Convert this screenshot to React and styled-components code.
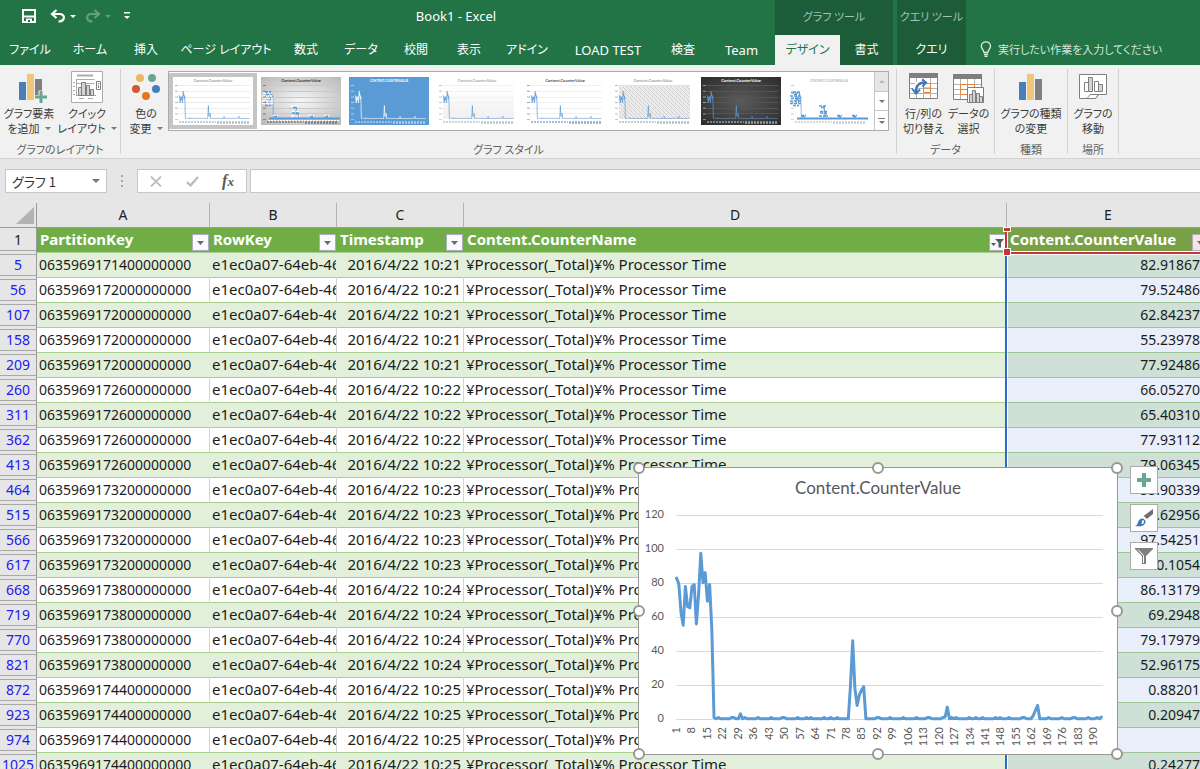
import React from "react";
import styled, { createGlobalStyle, css } from "styled-components";

const UI_FONT = '"Noto Sans", "Noto Sans CJK JP", sans-serif';
const JP_FONT = '"Noto Sans CJK JP", "Noto Sans", sans-serif';
const SHEET_FONT = '"Noto Sans", "Noto Sans CJK JP", sans-serif';
const CHART_FONT = 'Lato, "Noto Sans", sans-serif';

const c = {
  green: "#227447",
  darkGreen: "#1c5c38",
  ribbon: "#f1f1f1",
  chrome: "#e6e6e6",
  line: "#c6c6c6",
  rule: "#9b9b9b",
  series: "#5b9bd5",
  red: "#c8323c",
  blue: "#2e6ac8",
};

const GlobalStyle = createGlobalStyle`
  *, *::before, *::after { box-sizing: border-box; }
  body { margin: 0; font-family: ${UI_FONT}; background: #fff; }
  button, input { font: inherit; color: inherit; margin: 0; padding: 0; border: 0; background: none; }
  h1, h2 { margin: 0; font-weight: 400; }
`;

const Page = styled.div`
  display: flex;
  flex-direction: column;
  height: 100vh;
  overflow: hidden;
`;

/* ---------- title bar and tabs ---------- */

const Header = styled.header`
  display: flex;
  flex: none;
  background: ${c.green};
  color: #fff;
  overflow: hidden;
`;

const HeaderBlock = styled.div`
  display: flex;
  flex-direction: column;
  flex: none;
  background: ${(p) => (p.$context ? c.darkGreen : "transparent")};
  margin-right: ${(p) => p.$gap || 0}px;
`;

const TitleRow = styled.div`
  display: flex;
  align-items: center;
  height: 35px;
  padding-bottom: 3px;
`;

const QuickAccess = styled.div`
  display: flex;
  align-items: center;
  width: 137px;
  padding-left: 21px;
`;

const QuickButton = styled.button`
  display: flex;
  align-items: center;
  justify-content: center;
  width: ${(p) => p.$w}px;
  height: 20px;
  margin-left: ${(p) => p.$gap || 0}px;
  opacity: ${(p) => (p.$dim ? 0.3 : 1)};
  svg { display: block; flex: none; }
`;

const BookTitle = styled.h1`
  flex: 1;
  text-align: center;
  font-size: 13px;
  line-height: 20px;
`;

const ContextTitle = styled.div`
  flex: 1;
  text-align: center;
  font-family: ${JP_FONT};
  font-feature-settings: "palt";
  font-size: 11px;
  line-height: 20px;
  color: #a3c4b1;
`;

const Tabs = styled.nav`
  display: flex;
`;

const Tab = styled.button`
  width: ${(p) => p.$w}px;
  height: 30px;
  && { font-size: ${(p) => (p.$latin ? 13 : 12)}px; }
  line-height: 28px;
  font-feature-settings: "palt";
  white-space: nowrap;
  text-align: center;
  ${(p) => p.$active && css`
    background: ${c.ribbon};
    color: ${c.green};
  `}
`;

const TellMe = styled.label`
  display: flex;
  align-items: center;
  flex: 1;
  gap: 6px;
  height: 30px;
  margin-top: 35px;
  padding-left: 14px;
  padding-bottom: 2px;
  color: #d5e5db;
  min-width: 0;
  svg { flex: none; }
  input {
    flex: 1;
    min-width: 0;
    height: 24px;
    font-family: ${JP_FONT};
    font-size: 11px;
    font-feature-settings: "palt";
  }
  input::placeholder { color: #d5e5db; opacity: 1; }
`;

/* ---------- ribbon ---------- */

const Ribbon = styled.section`
  display: flex;
  flex: none;
  height: 94px;
  padding: 4px 0;
  background: ${c.ribbon};
  border-bottom: 1px solid #d2d2d2;
  overflow: hidden;
`;

const Group = styled.div`
  display: flex;
  flex-direction: column;
  flex: none;
  border-right: 1px solid #d2d2d2;
`;

const GroupBody = styled.div`
  display: flex;
  flex: 1;
  padding: 0 ${(p) => p.$right || 0}px 0 ${(p) => p.$left || 0}px;
`;

const GroupName = styled.div`
  height: 18px;
  text-align: center;
  font-family: ${JP_FONT};
  font-feature-settings: "palt";
  font-size: 11px;
  line-height: 26px;
  color: #5f5f5f;
`;

const RibbonButton = styled.button`
  display: flex;
  flex-direction: column;
  align-items: center;
  width: ${(p) => p.$w}px;
  padding-top: 1px;
  && {
    font-family: ${JP_FONT};
    font-size: 11px;
    line-height: 15px;
  }
  font-feature-settings: "palt";
  color: #3c3c3c;
  white-space: nowrap;
  svg { display: block; flex: none; }
`;

const RibbonLabel = styled.span`
  display: flex;
  flex-direction: column;
  align-items: center;
  padding-top: 2px;
`;

const LabelLine = styled.span`
  display: flex;
  align-items: center;
  gap: 5px;
`;

const Caret = styled.span`
  border: ${(p) => p.$size || 3}px solid transparent;
  border-top-color: ${(p) => p.$color || "#777"};
  border-bottom: 0;
`;

const Gallery = styled.div`
  display: flex;
  height: 60px;
  margin: 2px 7px 0 4px;
  border: 1px solid #ababab;
  background: #fff;
`;

const GalleryItem = styled.button`
  && { padding: 4px; }
  height: 56px;
  width: 88px;
  margin-top: 1px;
  overflow: hidden;
  && { background: ${(p) => (p.$selected ? "#c5c5c5" : "transparent")}; }
  svg { display: block; }
`;

const GalleryScroll = styled.div`
  display: flex;
  flex-direction: column;
  width: 14px;
  margin-left: 1px;
  border-left: 1px solid ${c.line};
`;

const ScrollButton = styled.button`
  display: flex;
  flex-direction: column;
  gap: 2px;
  align-items: center;
  justify-content: center;
  flex: 1;
  && {
    border-top: ${(p) => (p.$first ? 0 : 1)}px solid ${c.line};
    background: ${(p) => (p.$first ? "#e6e6e6" : "#fff")};
  }
`;

const CaretUp = styled.span`
  border: 3px solid transparent;
  border-bottom-color: #b8b8b8;
  border-top: 0;
`;

const MoreBar = styled.span`
  width: 7px;
  height: 1px;
  background: #777;
`;

/* ---------- formula bar ---------- */

const FormulaBar = styled.div`
  display: flex;
  flex: none;
  height: 44px;
  padding: 10px 0 10px 5px;
  background: ${c.chrome};
`;

const NameBox = styled.div`
  display: flex;
  align-items: center;
  width: 102px;
  border: 1px solid ${c.line};
  background: #fff;
  input {
    flex: 1;
    min-width: 0;
    padding-left: 6px;
    font-family: ${JP_FONT};
    font-size: 13px;
    font-feature-settings: "palt";
    color: #333;
  }
  button { display: flex; width: 20px; justify-content: center; }
`;

const Grip = styled.div`
  display: flex;
  flex-direction: column;
  align-items: center;
  justify-content: center;
  gap: 3px;
  width: 30px;
  i { width: 2px; height: 2px; background: #a6a6a6; }
`;

const FormulaActions = styled.div`
  display: flex;
  width: 110px;
  margin-right: 3px;
  border: 1px solid ${c.line};
  background: #fff;
  button { flex: 1; display: flex; align-items: center; justify-content: center; }
`;

const FunctionMark = styled.span`
  font-family: "Liberation Serif", serif;
  font-style: italic;
  font-weight: 700;
  font-size: 16px;
  line-height: 20px;
  color: #5a5a5a;
  small { font-size: 13px; }
`;

const FormulaInput = styled.input`
  flex: 1;
  min-width: 0;
  && {
    border: 1px solid ${c.line};
    border-right: 0;
    background: #fff;
  }
`;

/* ---------- sheet ---------- */

const Sheet = styled.main`
  position: relative;
  flex: 1;
  min-height: 0;
  overflow: hidden;
`;

const Grid = styled.table`
  width: calc(100% + 10px);
  table-layout: fixed;
  border-collapse: separate;
  border-spacing: 0;
  font-family: ${SHEET_FONT};
  font-size: 14px;
  line-height: 24px;
  color: #1c1c1c;
  th, td { padding: 0; height: 25px; white-space: nowrap; overflow: hidden; }
`;

const Corner = styled.th`
  background: ${c.chrome};
  border-right: 1px solid ${c.rule};
  border-bottom: 1px solid ${c.rule};
  svg { display: block; margin-left: 16px; }
`;

const ColumnHead = styled.th`
  background: ${c.chrome};
  border-bottom: 1px solid ${c.rule};
  border-right: 1px solid #b4b4b4;
  font-weight: 400;
  line-height: 22px;
`;

const RowHead = styled.th`
  background: ${c.chrome};
  border-right: 1px solid ${c.rule};
  font-weight: 400;
  color: ${(p) => (p.$first ? "#222" : "#2020f0")};
  && { padding: ${(p) => (p.$first ? 0 : 1)}px 0 2px; }
  span {
    display: block;
    height: ${(p) => (p.$first ? 23 : 22)}px;
    line-height: ${(p) => (p.$first ? 23 : 20)}px;
    border-top: ${(p) => (p.$first ? 0 : 1)}px solid #a8a8a8;
    border-bottom: 1px solid #a8a8a8;
  }
`;

const FieldHead = styled.th`
  position: relative;
  background: ${(p) => (p.$ranged ? "#7aa047" : "#70ad47")};
  border-bottom: 1px solid #a9d08e;
  color: #fff;
  font-size: 15px;
  text-align: left;
  && { overflow: ${(p) => (p.$ranged ? "visible" : "hidden")}; }
`;

const FieldRow = styled.div`
  display: flex;
  align-items: flex-end;
  justify-content: space-between;
  height: 24px;
  padding: 0 1px 1px 3px;
`;

const FilterButton = styled.button`
  display: flex;
  align-items: center;
  justify-content: center;
  width: 17px;
  height: 17px;
  && {
    border: 1px solid #a9aeb8;
    background: ${(p) => (p.$tint ? "#f6e3e6" : "#f8fafc")};
  }
`;

const RangeFrame = styled.div`
  position: absolute;
  inset: 0 0 -2px -2px;
  border-left: 2px solid ${c.red};
  border-bottom: 2px solid ${c.red};
  box-shadow: inset 1px -1px 0 #fff, 0 1px 0 #fff;
  pointer-events: none;
  z-index: 1;
`;

const RangeHandle = styled.i`
  position: absolute;
  left: -3px;
  ${(p) => (p.$top ? "top: 0; height: 3px;" : "bottom: -3px; height: 6px;")}
  width: 6px;
  background: ${c.red};
  outline: 1px solid #fff;
  z-index: 2;
`;

const Cell = styled.td`
  position: relative;
  background: ${(p) => (p.$band ? "#e2efda" : "#fff")};
  border-bottom: 1px solid #a9d08e;
  border-right: 1px solid ${(p) => (p.$band || p.$last ? "transparent" : "#d4d4d4")};
  text-align: ${(p) => p.$align || "left"};
  && { padding: 0 2px; }
`;

const TextCell = styled(Cell)`
  font-size: 15px;
  line-height: 22px;
  vertical-align: top;
`;

const ValueCell = styled(Cell)`
  background: ${(p) => (p.$band ? "#cfe0d6" : "#e9effa")};
  border-left: 1px solid #fff;
  border-right: 0;
  border-bottom-color: #9dc594;
  && { overflow: visible; }
  &::before {
    content: "";
    position: absolute;
    left: -3px;
    top: 0;
    bottom: -1px;
    width: 2px;
    background: ${c.blue};
  }
`;

/* ---------- floating chart ---------- */

const ChartFrame = styled.figure`
  position: absolute;
  left: 638px;
  top: 264px;
  width: 480px;
  height: 288px;
  margin: 0;
  border: 1px solid #979797;
  background: #fff;
  font-family: ${CHART_FONT};
  z-index: 3;
`;

const ChartTitle = styled.figcaption`
  padding-top: 8px;
  height: 30px;
  text-align: center;
  font-size: 17px;
  line-height: 24px;
  color: #595959;
`;

const Plot = styled.svg`
  display: block;
  text { fill: #595959; font-size: 11px; }
`;

const Knob = styled.i`
  position: absolute;
  left: ${(p) => p.$x};
  top: ${(p) => p.$y};
  width: 12px;
  height: 12px;
  margin: -6px;
  border: 2px solid #979797;
  border-radius: 50%;
  background: #fff;
`;

const ChartTools = styled.div`
  position: absolute;
  left: 491px;
  top: -2px;
  display: flex;
  flex-direction: column;
  gap: 10px;
`;

const ChartTool = styled.button`
  display: flex;
  align-items: center;
  justify-content: center;
  width: 28px;
  height: 28px;
  && { border: 1px solid #ababab; background: #fff; }
`;

/* ---------- data ---------- */

const TABS = [
  ["ファイル", 60], ["ホーム", 60], ["挿入", 52], ["ページ レイアウト", 108], ["数式", 52],
  ["データ", 58], ["校閲", 52], ["表示", 54], ["アドイン", 62], ["LOAD TEST", 100],
  ["検査", 50], ["Team", 67],
];

const ROWS = [
  [5, "0635969171400000000", "10:21", "82.918674"],
  [56, "0635969172000000000", "10:21", "79.524861"],
  [107, "0635969172000000000", "10:21", "62.842374"],
  [158, "0635969172000000000", "10:21", "55.239781"],
  [209, "0635969172000000000", "10:21", "77.924861"],
  [260, "0635969172600000000", "10:22", "66.052701"],
  [311, "0635969172600000000", "10:22", "65.403101"],
  [362, "0635969172600000000", "10:22", "77.931121"],
  [413, "0635969172600000000", "10:22", "79.063451"],
  [464, "0635969173200000000", "10:23", "55.903394"],
  [515, "0635969173200000000", "10:23", "73.629564"],
  [566, "0635969173200000000", "10:23", "97.542511"],
  [617, "0635969173200000000", "10:23", "80.10547"],
  [668, "0635969173800000000", "10:24", "86.131791"],
  [719, "0635969173800000000", "10:24", "69.29481"],
  [770, "0635969173800000000", "10:24", "79.179791"],
  [821, "0635969173800000000", "10:24", "52.961754"],
  [872, "0635969174400000000", "10:25", "0.882019"],
  [923, "0635969174400000000", "10:25", "0.209471"],
  [974, "0635969174400000000", "10:25", "0"],
  [1025, "0635969174400000000", "10:25", "0.242779"],
];

const LEAD = [82.9, 79.5, 62.8, 55.2, 77.9, 66.1, 65.4, 77.9, 79.1, 55.9, 73.6, 97.5, 80.1, 86.1, 69.3, 79.2, 53, 0.9];
const PEAKS = {
  30: 3, 80: 20, 81: 46, 82: 18, 83: 8, 84: 14, 85: 17, 86: 19,
  123: 1.2, 124: 7, 163: 2, 164: 5, 165: 8, 194: 1.2,
};
const SERIES = Array.from({ length: 194 }, (_, i) => {
  const n = i + 1;
  if (i < LEAD.length) return LEAD[i];
  if (PEAKS[n] !== undefined) return PEAKS[n];
  return n % 6 === 2 || n % 11 === 5 ? 0.9 : 0.1;
});

const seriesPoints = (x0, step, y0, unit) =>
  SERIES.map((v, i) => `${(x0 + (i + 0.5) * step).toFixed(1)},${(y0 - v * unit).toFixed(1)}`).join(" ");

/* ---------- icons ---------- */

const SaveIcon = () => (
  <svg width="14" height="14" viewBox="0 0 14 14" fill="none" stroke="#fff">
    <path d="M1 1h12v12H1z" strokeWidth="2" />
    <path d="M1 7.5h12" strokeWidth="2" />
    <path d="M4 9.5h6V13H4z" fill="#fff" stroke="none" />
    <path d="M6 11h2v2H6z" fill={c.green} stroke="none" />
  </svg>
);

const UndoIcon = ({ flip }) => (
  <svg width="16" height="14" viewBox="0 0 16 14" fill="none" stroke="#fff" strokeWidth="2.2">
    <g transform={flip ? "translate(16 0) scale(-1 1)" : undefined}>
      <path d="M6.5 1 2 5l4.500 4M2.500 5H9.500C16 5 15 12.500 8.500 12.500" />
    </g>
  </svg>
);

const CustomizeIcon = () => (
  <svg width="6" height="8" viewBox="0 0 6 8" fill="#fff">
    <path d="M0 0h6v1.500H0zM0 4h6L3 7z" />
  </svg>
);

const BulbIcon = () => (
  <svg width="12" height="16" viewBox="0 0 12 16" fill="none" stroke="#e3eee8" strokeWidth="1.300">
    <path d="M4 11.500c0-2.500-2.700-3.500-2.700-6.300a4.600 4.400 0 0 1 9.200 0c0 2.800-2.700 3.800-2.700 6.300z" />
    <path d="M4 13.500h4M4.500 15.300h3" />
  </svg>
);

const Bars = () => (
  <>
    <path d="M0 8h7v18H0z" fill="#4a7ebb" />
    <path d="M8 0h7v26H8z" fill="#efc77b" />
    <path d="M16 5h7v21h-7z" fill="#7f7f7f" />
  </>
);

const AddElementIcon = () => (
  <svg width="36" height="34" viewBox="-6 0 36 34">
    <g transform="translate(2 4)"><Bars /></g>
    <path d="M17 25h4.500v-4.500h5V25H31v5h-4.500v4.500h-5V30H17z" fill="#f1f1f1" />
    <path d="M18 25.500h4.500V21h3v4.500H30v3h-4.500V33h-3v-4.500H18z" fill="#6aa792" />
  </svg>
);

const ChartTypeIcon = () => (
  <svg width="24" height="34" viewBox="0 0 24 34">
    <g transform="translate(0 4)"><Bars /></g>
  </svg>
);

const QuickLayoutIcon = () => (
  <svg width="34" height="34" viewBox="0 0 34 34" fill="none" stroke="#7f7f7f">
    <path d="M1.500 1.500h31v31h-31z" fill="#fff" stroke="#ababab" />
    <path d="M7 5.500h16" stroke="#ababab" strokeWidth="2" />
    <path d="M6.500 9.500h18M6.500 9v17M6.500 13.500h18M6 25.500h20" stroke="#ababab" />
    <path d="M3 12.500h2M3 16.500h2M3 20.500h2M3 24.500h2M9 28.500h5M18 28.500h5" stroke="#ababab" />
    <path d="M8.500 17.500h3v8h-3zM11.500 12.500h4v13h-4zM16.500 15.500h3v10h-3zM20.500 19.500h3v6h-3z" fill="#d4d4d4" />
    <path d="M26.500 11.500h4v8h-4zM28.500 13v1.500M28.500 15.500V18" fill="#fff" />
  </svg>
);

const ColorsIcon = () => (
  <svg width="30" height="34" viewBox="0 0 30 34">
    <circle cx="9" cy="8" r="4" fill="#efb763" />
    <circle cx="21" cy="8" r="4" fill="#6aa792" />
    <circle cx="5" cy="19" r="4" fill="#d65532" />
    <circle cx="25" cy="19" r="4" fill="#4a7ebb" />
    <circle cx="15" cy="26" r="4" fill="#e8761c" />
  </svg>
);

const TableLines = () => (
  <>
    <path d="M.5.500h28v25H.500z" fill="#fff" stroke="#7f7f7f" />
    <path d="M1 10.500h27M1 15.500h27M1 20.500h27M7.500 5v20M14.500 5v20M21.500 5v20" stroke="#b4b4b4" />
    <path d="M0 0h29v5H0z" fill="#7f7f7f" stroke="none" />
  </>
);

const SwitchIcon = () => (
  <svg width="30" height="34" viewBox="0 0 30 34" fill="none">
    <g transform="translate(0 3)">
      <TableLines />
      <path d="M14.500 10.500h7v9h-7zM14.500 15h7" stroke="#e8823a" />
      <path d="M6 18C6 12 10 9.500 15 9.500" stroke="#fff" strokeWidth="5" />
      <path d="M7 19C6.500 13 10 9.500 16 9.500" stroke="#3f78b8" strokeWidth="2.500" />
      <path d="M13 6.500 17 9.500l-3.500 4M3 15.500l4 5 4-4" stroke="#3f78b8" strokeWidth="2" />
    </g>
  </svg>
);

const SelectDataIcon = () => (
  <svg width="32" height="34" viewBox="0 0 32 34" fill="none">
    <g transform="translate(0 4)">
      <TableLines />
      <path d="M7.500 10.500h14v10h-14zM14.500 10.500v10M7.500 15.500h14" stroke="#e8823a" />
      <path d="M14.500 13.500h16v15h-16z" fill="#fff" stroke="#7f7f7f" />
      <path d="M16.500 20.500h3v8h-3zM19.500 16.500h3v12h-3zM23.500 19.500h3v9h-3zM26.500 22.500h3v6h-3z" fill="#d4d4d4" stroke="#7f7f7f" />
    </g>
  </svg>
);

const MoveChartIcon = () => (
  <svg width="30" height="34" viewBox="0 0 30 34" fill="none" stroke="#7f7f7f">
    <path d="M1.500 4.500h27v20h-8l-3 4h-16z" fill="#fff" />
    <path d="M7 28.500c5 0 3-4 6-4h8c-2 0-2 4-4 4z" fill="#fff" />
    <path d="M6.500 12.500h4v9h-4zM16.500 11.500h4v10h-4z" fill="#fff" />
    <path d="M10.500 7.500h4v14h-4zM20.500 14.500h4v7h-4z" fill="#d4d4d4" />
  </svg>
);

const ArrowDown = () => (
  <svg width="7" height="4" viewBox="0 0 7 4"><path d="M0 0h7L3.500 4z" fill="#6a6a6a" /></svg>
);

const FunnelArrow = () => (
  <svg width="13" height="10" viewBox="0 0 13 10" fill="#5a5a5a">
    <path d="M0 5h5L2.500 8zM4 1h9L10 4.500V9.500H7.500v-5z" />
  </svg>
);

const CancelIcon = () => (
  <svg width="12" height="11" viewBox="0 0 12 11" stroke="#bdbdbd" strokeWidth="1.800"><path d="M1 .500l10 10M11 .500l-10 10" /></svg>
);

const EnterIcon = () => (
  <svg width="13" height="11" viewBox="0 0 13 11" fill="none" stroke="#bdbdbd" strokeWidth="2.400"><path d="M1 6l3.500 3.500L12 1" /></svg>
);

const PlusIcon = () => (
  <svg width="14" height="14" viewBox="0 0 14 14"><path d="M5 0h4v5h5v4H9v5H5V9H0V5h5z" fill="#6aa792" /></svg>
);

const BrushIcon = () => (
  <svg width="18" height="18" viewBox="0 0 18 18">
    <path d="M18 0v5l-6 5-3.500-3z" fill="#6f6f6f" />
    <path d="M8 7.500 11.500 11" stroke="#fff" strokeWidth="1.500" />
    <path d="M0 17c4-1 2-7 7-7.500 2 0 4 2 3.500 4C9.500 17 5 18 0 17z" fill="#3f78b8" />
    <path d="M7.500 11c1 0 2 1 1.500 2.500-.5 1-1.500 1.500-3 1.500 1.500-1 .500-2.500 1.500-4z" fill="#fff" />
  </svg>
);

const FunnelIcon = () => (
  <svg width="18" height="17" viewBox="0 0 18 17">
    <path d="M0 0h18v1l-7 7v8H7V8L0 1z" fill="#7f7f7f" />
    <path d="M3 1.500 8.500 7.500V15" fill="none" stroke="#fff" strokeWidth="1" />
  </svg>
);

/* ---------- chart style thumbnails ---------- */

const THUMBS = [
  { name: "スタイル 1", bg: "#fff", ink: "#777", line: c.series, grid: "#ececec" },
  { name: "スタイル 2", bg: "url(#silver)", ink: "#333", line: c.series, grid: "#c9c9c9", labels: true, bold: true },
  { name: "スタイル 3", bg: c.series, ink: "#fff", line: "#fff", grid: "#5b9bd5", caps: true, bold: true },
  { name: "スタイル 4", bg: "#fff", ink: "#888", line: c.series, grid: "#f2f2f2", plot: "url(#fade)" },
  { name: "スタイル 5", bg: "#fff", ink: "#44546a", line: c.series, grid: "#f0f0f0", bold: true },
  { name: "スタイル 6", bg: "#fff", ink: "#777", line: c.series, grid: "#e2e2e2", plot: "url(#hatch)" },
  { name: "スタイル 7", bg: "url(#coal)", ink: "#fff", line: c.series, grid: "#555", bold: true },
  { name: "スタイル 8", bg: "#fff", ink: "#999", line: c.series, grid: "#fff", labels: true, caps: true },
];

const TickMarks = ({ ink }) => (
  <g stroke={ink} opacity="0.5">
    <path d="M6 45H43" strokeWidth="1.500" strokeDasharray="2 1" />
    <path d="M44 45.500H76" strokeWidth="2.500" strokeDasharray="2 1" />
    <path d="M3.500 8V43" strokeWidth="3" strokeDasharray="1 4.700" />
  </g>
);

const ValueLabels = ({ plain }) => (
  <g stroke={plain ? c.series : "#fff"} strokeWidth="1.500" strokeDasharray="3 1">
    <path d="M2 16h9M1 19h10M2 21.500h10M1 24h11M1 26.500h11M30 29h8M31 34.500h7M30 39h9M12 38.500h5M48 38.500h5M63 38.500h5" />
    <path d="M8 41.500H79" strokeDasharray="none" stroke={c.series} strokeWidth="2" />
    <path d="M4 15h6M5 17.500h4M4 28.500h6M31 36h7M32 30.500h4M13 39.500h4M49 39.500h4M64 39.500h4" stroke={c.series} />
    {!plain && <path d="M7 43.500H78" strokeWidth="1" strokeDasharray="2 1" />}
  </g>
);

const Thumb = ({ t }) => (
  <svg width="80" height="48" viewBox="0 0 80 48" fontFamily="Lato, sans-serif">
    <defs>
      <radialGradient id="silver" cx="50%" cy="50%" r="75%">
        <stop offset="0" stopColor="#f6f6f6" /><stop offset="1" stopColor="#b4b4b4" />
      </radialGradient>
      <radialGradient id="coal" cx="50%" cy="50%" r="70%">
        <stop offset="0" stopColor="#5c5c5c" /><stop offset="1" stopColor="#2b2b2b" />
      </radialGradient>
      <linearGradient id="fade" x1="0" y1="0" x2="0" y2="1">
        <stop offset="0" stopColor="#fff" /><stop offset="1" stopColor="#f0f0f0" />
      </linearGradient>
      <pattern id="hatch" width="4" height="4" patternUnits="userSpaceOnUse">
        <path d="M0 0h4v4H0z" fill="#ececec" /><path d="M0 0l4 4" stroke="#cfcfcf" />
      </pattern>
    </defs>
    <path d="M0 0h80v48H0z" fill={t.bg} />
    {t.plot && <path d="M6 9h71v33H6z" fill={t.plot} />}
    <path d="M6 8.500H77M6 14.500H77M6 20.500H77M6 25.500H77M6 31.500H77M6 36.500H77" stroke={t.grid} />
    <text x="40" y="5" fontSize={t.caps ? 3 : 4} fontWeight={t.bold ? 700 : 400} fill={t.ink} textAnchor="middle">
      {t.caps ? "CONTENT.COUNTERVALUE" : "Content.CounterValue"}
    </text>
    <polyline points={seriesPoints(6, 0.365, 41.5, 0.28)} fill="none" stroke={t.line} strokeWidth="0.700" />
    {t.labels && <ValueLabels plain={t.caps} />}
    <TickMarks ink={t.ink} />
  </svg>
);

const CounterChart = () => (
  <ChartFrame aria-label="Content.CounterValue">
    <ChartTitle>Content.CounterValue</ChartTitle>
    <Plot width="478" height="256" viewBox="0 0 478 256">
      {[0, 20, 40, 60, 80, 100, 120].map((v) => (
        <g key={v}>
          <path d={`M37 ${221.5 - v * 1.7}H464`} stroke="#d9d9d9" />
          <text x="25" y={224 - v * 1.7} textAnchor="end">{v}</text>
        </g>
      ))}
      <polyline
        points={seriesPoints(36.5, 2.201, 221, 1.7)}
        fill="none" stroke={c.series} strokeWidth="3" strokeLinejoin="round" strokeLinecap="round"
      />
      {Array.from({ length: 28 }, (_, i) => (
        <text key={i} textAnchor="end" transform={`translate(${41 + i * 15.45} 229) rotate(-90)`}>{1 + i * 7}</text>
      ))}
    </Plot>
    {["0%", "50%", "100%"].flatMap((x) => ["0%", "50%", "100%"].map((y) =>
      x === "50%" && y === "50%" ? null : <Knob key={x + y} $x={x} $y={y} />
    ))}
    <ChartTools>
      <ChartTool aria-label="グラフ要素"><PlusIcon /></ChartTool>
      <ChartTool aria-label="グラフ スタイル"><BrushIcon /></ChartTool>
      <ChartTool aria-label="グラフ フィルター"><FunnelIcon /></ChartTool>
    </ChartTools>
  </ChartFrame>
);

const BigButton = ({ w, icon, lines, menu }) => (
  <RibbonButton $w={w}>
    {icon}
    <RibbonLabel>
      <LabelLine>{lines[0]}</LabelLine>
      <LabelLine>{lines[1]}{menu && <Caret />}</LabelLine>
    </RibbonLabel>
  </RibbonButton>
);

const Field = ({ children, ranged, icon }) => (
  <FieldHead scope="col" $ranged={ranged}>
    <FieldRow>
      <span>{children}</span>
      <FilterButton $tint={ranged} aria-label={`${children} フィルター`}>{icon || <ArrowDown />}</FilterButton>
    </FieldRow>
    {ranged && <><RangeFrame /><RangeHandle $top /><RangeHandle /></>}
  </FieldHead>
);

export default function App() {
  return (
    <Page>
      <GlobalStyle />
      <Header>
        <HeaderBlock>
          <TitleRow>
            <QuickAccess>
              <QuickButton $w={16} aria-label="上書き保存"><SaveIcon /></QuickButton>
              <QuickButton $w={16} $gap={13} aria-label="元に戻す"><UndoIcon /></QuickButton>
              <QuickButton $w={8} $gap={3} aria-label="元に戻す履歴"><Caret $color="#fff" /></QuickButton>
              <QuickButton $w={16} $gap={8} $dim aria-label="やり直し"><UndoIcon flip /></QuickButton>
              <QuickButton $w={8} $gap={3} $dim aria-label="やり直し履歴"><Caret $color="#fff" /></QuickButton>
              <QuickButton $w={8} $gap={11} aria-label="カスタマイズ"><CustomizeIcon /></QuickButton>
            </QuickAccess>
            <BookTitle>Book1 - Excel</BookTitle>
          </TitleRow>
          <Tabs>{TABS.map(([t, w]) => <Tab key={t} $w={w} $latin={/^[A-Z]/.test(t)}>{t}</Tab>)}</Tabs>
        </HeaderBlock>
        <HeaderBlock $context $gap={4}>
          <TitleRow><ContextTitle>グラフ ツール</ContextTitle></TitleRow>
          <Tabs><Tab $w={65} $active>デザイン</Tab><Tab $w={53}>書式</Tab></Tabs>
        </HeaderBlock>
        <HeaderBlock $context>
          <TitleRow><ContextTitle>クエリ ツール</ContextTitle></TitleRow>
          <Tabs><Tab $w={69}>クエリ</Tab></Tabs>
        </HeaderBlock>
        <TellMe>
          <BulbIcon />
          <input aria-label="操作アシスト" placeholder="実行したい作業を入力してください" />
        </TellMe>
      </Header>

      <Ribbon>
        <Group>
          <GroupBody $right={4}>
            <BigButton w={58} icon={<AddElementIcon />} lines={["グラフ要素", "を追加"]} menu />
            <BigButton w={58} icon={<QuickLayoutIcon />} lines={["クイック", "レイアウト"]} menu />
          </GroupBody>
          <GroupName>グラフのレイアウト</GroupName>
        </Group>
        <Group>
          <GroupBody $left={7}>
            <BigButton w={36} icon={<ColorsIcon />} lines={["色の", "変更"]} menu />
            <Gallery>
              {THUMBS.map((t, i) => (
                <GalleryItem key={t.name} $selected={i === 0} aria-label={t.name}><Thumb t={t} /></GalleryItem>
              ))}
              <GalleryScroll>
                <ScrollButton $first aria-label="前へ"><CaretUp /></ScrollButton>
                <ScrollButton aria-label="次へ"><Caret /></ScrollButton>
                <ScrollButton aria-label="その他"><MoreBar /><Caret /></ScrollButton>
              </GalleryScroll>
            </Gallery>
          </GroupBody>
          <GroupName>グラフ スタイル</GroupName>
        </Group>
        <Group>
          <GroupBody $left={4} $right={3}>
            <BigButton w={45} icon={<SwitchIcon />} lines={["行/列の", "切り替え"]} />
            <BigButton w={45} icon={<SelectDataIcon />} lines={["データの", "選択"]} />
          </GroupBody>
          <GroupName>データ</GroupName>
        </Group>
        <Group>
          <GroupBody $left={4} $right={4}>
            <BigButton w={64} icon={<ChartTypeIcon />} lines={["グラフの種類", "の変更"]} />
          </GroupBody>
          <GroupName>種類</GroupName>
        </Group>
        <Group>
          <GroupBody $left={5} $right={5}>
            <BigButton w={40} icon={<MoveChartIcon />} lines={["グラフの", "移動"]} />
          </GroupBody>
          <GroupName>場所</GroupName>
        </Group>
      </Ribbon>

      <FormulaBar>
        <NameBox>
          <input aria-label="名前ボックス" defaultValue="グラフ 1" />
          <button aria-label="名前の一覧"><Caret $size={4} /></button>
        </NameBox>
        <Grip><i /><i /><i /></Grip>
        <FormulaActions>
          <button aria-label="キャンセル"><CancelIcon /></button>
          <button aria-label="入力"><EnterIcon /></button>
          <button aria-label="関数の挿入"><FunctionMark>f<small>x</small></FunctionMark></button>
        </FormulaActions>
        <FormulaInput aria-label="数式バー" />
      </FormulaBar>

      <Sheet>
        <Grid>
          <colgroup>
            <col width="37" /><col width="173" /><col width="127" /><col width="127" /><col /><col width="203" />
          </colgroup>
          <thead>
            <tr>
              <Corner aria-label="すべて選択">
                <svg width="18" height="18" viewBox="0 0 18 18"><path d="M18 1v17H0z" fill="#b3b3b3" /></svg>
              </Corner>
              {["A", "B", "C", "D", "E"].map((l) => <ColumnHead key={l} scope="col">{l}</ColumnHead>)}
            </tr>
          </thead>
          <tbody>
            <tr>
              <RowHead scope="row" $first><span>1</span></RowHead>
              <Field>PartitionKey</Field>
              <Field>RowKey</Field>
              <Field>Timestamp</Field>
              <Field icon={<FunnelArrow />}>Content.CounterName</Field>
              <Field ranged>Content.CounterValue</Field>
            </tr>
            {ROWS.map(([n, key, time, value], i) => {
              const band = i % 2 === 0;
              return (
                <tr key={n}>
                  <RowHead scope="row"><span>{n}</span></RowHead>
                  <Cell $band={band}>{key}</Cell>
                  <TextCell $band={band}>e1ec0a07-64eb-46</TextCell>
                  <TextCell $band={band} $align="right">2016/4/22 {time}</TextCell>
                  <TextCell $band={band} $last>¥Processor(_Total)¥% Processor Time</TextCell>
                  <ValueCell $band={band} $align="right">{value}</ValueCell>
                </tr>
              );
            })}
          </tbody>
        </Grid>
        <CounterChart />
      </Sheet>
    </Page>
  );
}
